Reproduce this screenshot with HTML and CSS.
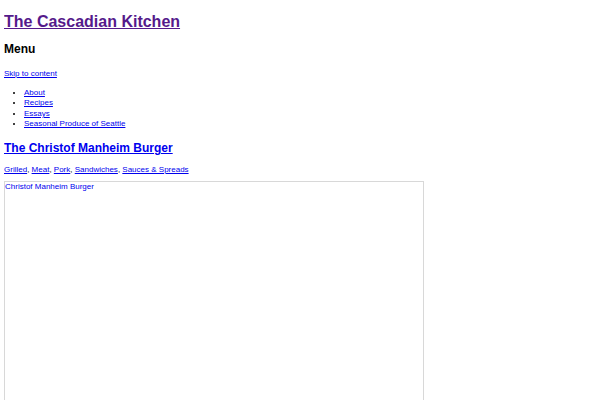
FILE: index.html
```html
<!DOCTYPE html>
<html lang="en">
<head>
    <meta charset="UTF-8">
    <meta name="viewport" content="width=device-width, initial-scale=1.0">
    <title>The Christof Manheim Burger | The Cascadian Kitchen</title>
    <link rel="stylesheet" href="styles.css">
</head>
<body>

<header class="site-header">
    <h1 class="site-title"><a href="#" class="visited">The Cascadian Kitchen</a></h1>
    <nav class="site-nav">
        <h2 class="menu-toggle">Menu</h2>
        <a href="#content" class="skip-link">Skip to content</a>
        <ul class="menu">
            <li><a href="#">About</a></li>
            <li><a href="#">Recipes</a></li>
            <li><a href="#">Essays</a></li>
            <li><a href="#">Seasonal Produce of Seattle</a></li>
        </ul>
    </nav>
</header>

<main id="content">
    <article class="post">
        <h1 class="entry-title"><a href="#">The Christof Manheim Burger</a></h1>
        <p class="entry-cats">
            <a href="#">Grilled</a>, <a href="#">Meat</a>, <a href="#">Pork</a>, <a href="#">Sandwiches</a>, <a href="#">Sauces &amp; Spreads</a>
        </p>
        <a href="#" class="photo-link">
            <div class="photo">Christof Manheim Burger</div>
        </a>
    </article>
</main>

</body>
</html>
```

FILE: styles.css
```css
body {
    font-family: "Liberation Sans", Arial, sans-serif;
    font-size: 8px;
    line-height: 10.6px;
    margin: 4px;
    background: #fff;
    color: #000;
}
a {
    color: #0000ee;
}
a.visited {
    color: #551a8b;
}
h1, h2 {
    line-height: normal;
}
.site-title {
    font-size: 16px;
    margin: 9px 0 10px;
}
.menu-toggle {
    font-size: 12px;
    margin: 11px 0 13px;
}
.skip-link {
    display: block;
}
.menu {
    margin: 8px 0 11px;
    padding-left: 20px;
}
.entry-title {
    font-size: 12px;
    margin: 10px 0;
}
.entry-cats {
    margin: 8px 0 5px;
}
.photo-link {
    text-decoration: none;
}
.photo {
    width: 420px;
    height: 420px;
    box-sizing: border-box;
    border: 1px solid #d8d8d8;
    color: #0000ee;
}
```
